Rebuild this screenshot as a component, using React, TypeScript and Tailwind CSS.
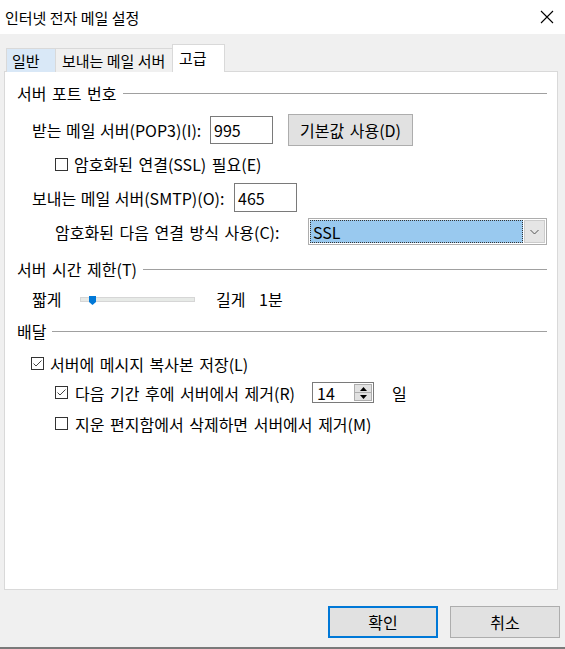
import React from "react";

function Box({ checked }: { checked?: boolean }) {
  return (
    <div className="w-[13px] h-[13px] border border-[#333333] bg-white flex items-center justify-center shrink-0">
      {checked && (
        <svg width="11" height="11" viewBox="0 0 11 11">
          <path d="M1.5 5.5 L4 8 L9.5 2.5" stroke="#444" strokeWidth="1" fill="none" />
        </svg>
      )}
    </div>
  );
}

function Heading({ text }: { text: string }) {
  return (
    <div className="flex items-center h-[20px] pl-[12px] pr-[10px]">
      <span className="leading-none whitespace-nowrap">{text}</span>
      <div className="flex-1 h-px bg-[#a0a0a0] ml-[6px]" />
    </div>
  );
}

export default function App() {
  return (
    <div className="w-[565px] h-[649px] bg-[#f0f0f0] flex flex-col border-b-2 border-[#7a7a7a] font-['Noto_Sans_CJK_KR','Noto_Sans',sans-serif] text-[15px] text-black overflow-hidden">
      {/* Title bar */}
      <div className="h-[34px] bg-white flex items-center justify-between shrink-0">
        <span className="pl-[5px] leading-none">인터넷 전자 메일 설정</span>
        <svg width="14" height="14" viewBox="0 0 14 14" className="mr-[11px]">
          <path d="M1 1 L13 13 M13 1 L1 13" stroke="#000" strokeWidth="1.1" />
        </svg>
      </div>

      {/* Tabs */}
      <div className="flex items-end pl-[6px] mt-[10px] h-[28px] relative z-10 -mb-px">
        <div className="h-[24px] w-[49px] bg-[#d9e8f7] border-t border-l border-[#d9d9d9] flex items-center pl-[5px] leading-none">
          일반
        </div>
        <div className="h-[24px] w-[117px] bg-[#f0f0f0] border-t border-l border-[#d9d9d9] flex items-center pl-[6px] leading-none whitespace-nowrap">
          보내는 메일 서버
        </div>
        <div className="h-[28px] w-[53px] bg-white border-t border-l border-r border-[#d9d9d9] flex items-center pl-[6px] pb-[3px] leading-none">
          고급
        </div>
      </div>

      {/* Panel */}
      <div className="ml-[4px] w-[554px] h-[519px] border border-[#d9d9d9] bg-white flex flex-col shrink-0 text-[16px] [word-spacing:2px]">
        <div className="mt-[11px]">
          <Heading text="서버 포트 번호" />
        </div>

        <div className="mt-[11px] h-[32px] flex items-center ml-[27px]">
          <span className="w-[178px] shrink-0 leading-none whitespace-nowrap [word-spacing:1px]">받는 메일 서버(POP3)(I):</span>
          <div className="w-[63px] h-[28px] border border-[#7a7a7a] flex items-center pl-[3px] leading-none">995</div>
          <div className="ml-[15px] w-[125px] h-[32px] bg-[#e1e1e1] border border-[#adadad] flex items-center justify-center leading-none">
            기본값 사용(D)
          </div>
        </div>

        <div className="mt-[10px] h-[16px] flex items-center ml-[50px]">
          <Box />
          <span className="ml-[6px] leading-none whitespace-nowrap">암호화된 연결(SSL) 필요(E)</span>
        </div>

        <div className="mt-[11px] h-[29px] flex items-center ml-[27px]">
          <span className="w-[202px] shrink-0 leading-none whitespace-nowrap [word-spacing:1px]">보내는 메일 서버(SMTP)(O):</span>
          <div className="w-[63px] h-[29px] border border-[#7a7a7a] flex items-center pl-[3px] leading-none">465</div>
        </div>

        <div className="mt-[6px] h-[27px] flex items-center ml-[50px]">
          <span className="w-[253px] shrink-0 leading-none whitespace-nowrap">암호화된 다음 연결 방식 사용(C):</span>
          <div className="w-[239px] h-[27px] border border-[#adadad] bg-white flex p-px">
            <div className="flex-1 bg-[#99c9ef] border border-dotted border-[#333] flex items-center pl-[2px] leading-none">
              SSL
            </div>
            <div className="w-[21px] ml-px bg-[#e5e5e5] border border-[#cccccc] flex items-center justify-center">
              <svg width="9" height="6" viewBox="0 0 9 6">
                <path d="M0.5 1 L4.5 5 L8.5 1" stroke="#555" strokeWidth="1" fill="none" />
              </svg>
            </div>
          </div>
        </div>

        <div className="mt-[14px]">
          <Heading text="서버 시간 제한(T)" />
        </div>

        <div className="mt-[10px] h-[20px] flex items-center ml-[27px]">
          <span className="w-[48px] shrink-0 leading-none">짧게</span>
          <div className="relative w-[115px] h-[5px] bg-[#e7eae7] border border-[#d6d6d6]">
            <svg width="7" height="9" viewBox="0 0 7 9" className="absolute left-[8px] top-[-2px]">
              <path d="M0 0 H7 V6 L3.5 9 L0 6 Z" fill="#0078d7" />
            </svg>
          </div>
          <span className="ml-[21px] w-[43px] shrink-0 leading-none">길게</span>
          <span className="leading-none">1분</span>
        </div>

        <div className="mt-[12px]">
          <Heading text="배달" />
        </div>

        <div className="mt-[14px] h-[17px] flex items-center ml-[26px]">
          <Box checked />
          <span className="ml-[6px] leading-none whitespace-nowrap">서버에 메시지 복사본 저장(L)</span>
        </div>

        <div className="mt-[10px] h-[21px] flex items-center ml-[50px]">
          <Box checked />
          <span className="ml-[7px] w-[237px] shrink-0 leading-none whitespace-nowrap">다음 기간 후에 서버에서 제거(R)</span>
          <div className="w-[62px] h-[21px] border border-[#7a7a7a] flex items-center">
            <span className="flex-1 pl-[4px] leading-none">14</span>
            <div className="w-[18px] h-[17px] mr-px flex flex-col bg-[#e1e1e1] border border-[#adadad]">
              <div className="flex-1 flex items-center justify-center border-b border-[#adadad]">
                <svg width="7" height="4" viewBox="0 0 7 4"><path d="M0 4 L3.5 0 L7 4 Z" fill="#000" /></svg>
              </div>
              <div className="flex-1 flex items-center justify-center">
                <svg width="7" height="4" viewBox="0 0 7 4"><path d="M0 0 L3.5 4 L7 0 Z" fill="#000" /></svg>
              </div>
            </div>
          </div>
          <span className="ml-[18px] leading-none">일</span>
        </div>

        <div className="mt-[12px] h-[17px] flex items-center ml-[50px]">
          <Box />
          <span className="ml-[7px] leading-none whitespace-nowrap">지운 편지함에서 삭제하면 서버에서 제거(M)</span>
        </div>
      </div>

      {/* Buttons */}
      <div className="mt-[16px] flex justify-end pr-[5px] gap-[12px] text-[16px]">
        <div className="w-[110px] h-[32px] bg-[#e1e1e1] border-2 border-[#0078d7] flex items-center justify-center leading-none">
          확인
        </div>
        <div className="w-[110px] h-[32px] bg-[#e1e1e1] border border-[#adadad] flex items-center justify-center leading-none">
          취소
        </div>
      </div>
    </div>
  );
}
